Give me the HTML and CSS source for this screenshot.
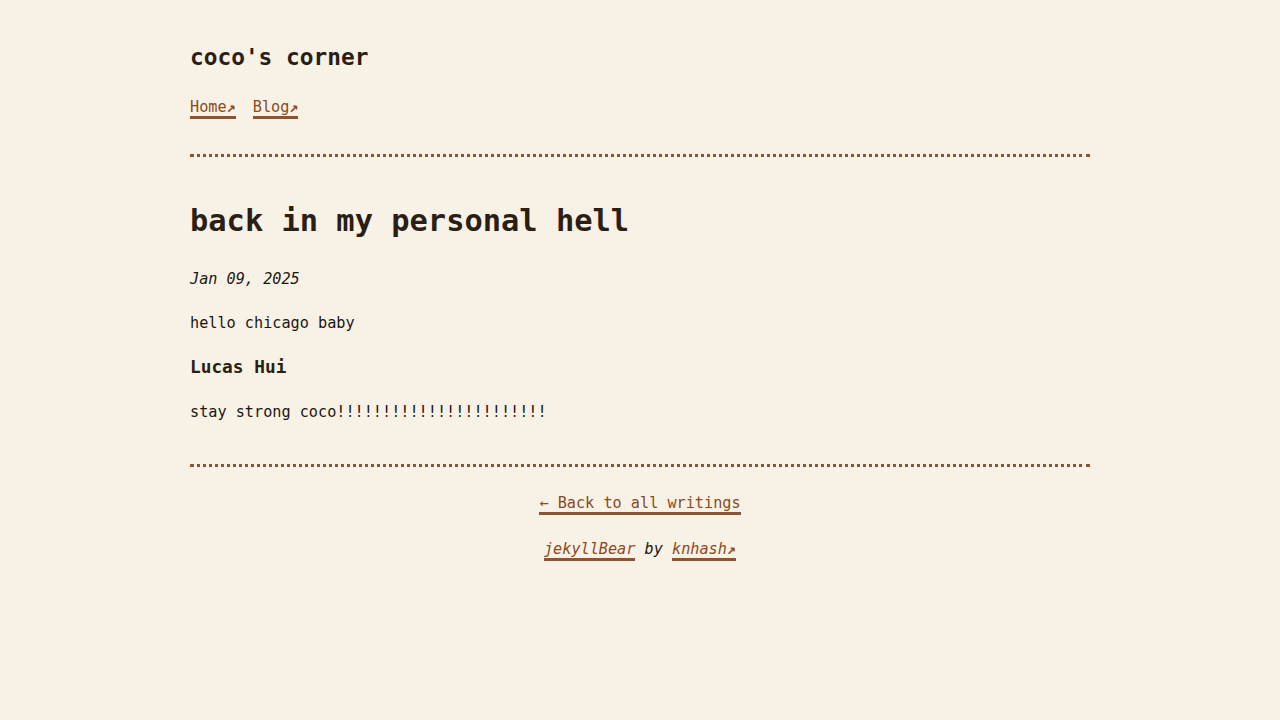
FILE: index.html
```html
<!DOCTYPE html>
<html lang="en">
<head>
<meta charset="utf-8">
<title>back in my personal hell | coco's corner</title>
<link rel="stylesheet" href="styles.css">
</head>
<body>
<div class="page">
  <header class="site-header">
    <h2 class="site-title">coco's corner</h2>
    <nav class="site-nav">
      <a class="ext" href="#">Home</a>
      <a class="ext" href="#">Blog</a>
    </nav>
  </header>
  <hr class="rule">
  <main class="post">
    <h1 class="post-title">back in my personal hell</h1>
    <p class="post-date"><i>Jan 09, 2025</i></p>
    <p class="post-p">hello chicago baby</p>
    <h3 class="post-h3">Lucas Hui</h3>
    <p class="post-p">stay strong coco!!!!!!!!!!!!!!!!!!!!!!!</p>
  </main>
  <hr class="rule rule-bottom">
  <footer class="site-footer">
    <p class="back"><a href="#">← Back to all writings</a></p>
    <p class="credit"><i><a href="#">jekyllBear</a> by <a class="ext" href="#">knhash</a></i></p>
  </footer>
</div>
</body>
</html>
```

FILE: styles.css
```css
html, body {
  margin: 0;
  padding: 0;
  background: #f8f1e6;
}
body {
  font-family: "DejaVu Sans Mono", "Liberation Mono", monospace;
  font-size: 15.2px;
  line-height: 1.5;
  color: #1c1610;
}
.page {
  max-width: 900px;
  margin: 0 auto;
  padding-top: 44px;
}
a {
  display: inline-block;
  line-height: 1.05;
  color: #8b4a1c;
  text-decoration: none;
  border-bottom: 3px solid #8f5330;
}
a.ext::after {
  content: "↗";
  font-weight: bold;
}
.site-title {
  margin: 0;
  font-size: 22.8px;
  line-height: 1.2;
  color: #2b1e14;
}
.site-nav {
  margin-top: 29px;
  display: flex;
  gap: 17px;
  line-height: 1.5;
}
.rule {
  border: 0;
  border-top: 3px dotted #8f5330;
  margin: 35px 0 0;
  height: 0;
}
.post-title {
  margin: 46px 0 0;
  font-size: 30.4px;
  line-height: 1.2;
  color: #2b1e14;
}
.post-date {
  margin: 28px 0 0;
}
.post-p {
  margin: 21px 0 0;
}
.post-h3 {
  margin: 22px 0 0;
  font-size: 17.8px;
  line-height: 1.2;
  color: #2b1e14;
}
.post-h3 + .post-p {
  margin-top: 23px;
}
.rule-bottom {
  margin-top: 40px;
}
.site-footer {
  text-align: center;
}
.site-footer a {
  line-height: 1.2;
}
.back {
  margin: 25px 0 0;
}
.credit {
  margin: 23px 0 0;
}
```
